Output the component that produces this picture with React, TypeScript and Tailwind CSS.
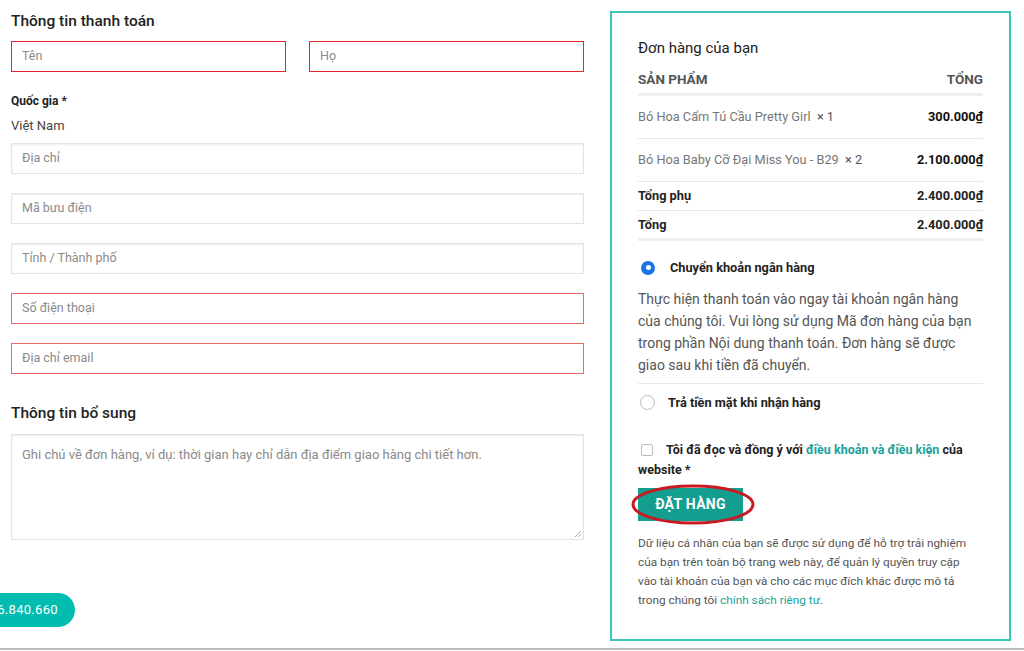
import React from "react";

const font = { fontFamily: "Roboto, 'Noto Sans', Arial, sans-serif" };

function DarkRedField({ ph }: { ph: string }) {
  return (
    <div className="h-[31px] flex items-center px-[10px] bg-white text-[12.5px] text-[#8a8a8a] border-[1.5px] border-solid border-[#e3262e]">
      {ph}
    </div>
  );
}

function RedField({ ph }: { ph: string }) {
  return (
    <div className="h-[31px] flex items-center px-[10px] bg-white text-[12.5px] text-[#8a8a8a] border-[1.5px] border-solid border-[#ee6a6a]">
      {ph}
    </div>
  );
}

function Field({ ph }: { ph: string }) {
  return (
    <div className="h-[31px] flex items-center px-[10px] bg-white text-[12.5px] text-[#8a8a8a] border border-[#e3e3e3] shadow-[inset_0_1px_2px_rgba(0,0,0,0.08)]">
      {ph}
    </div>
  );
}

export default function App() {
  return (
    <div style={font} className="relative w-[1024px] h-[651px] bg-white overflow-hidden text-[#222]">
      <div className="flex">
        {/* Left column */}
        <div className="ml-[11px] w-[573px] pt-[11px]">
          <h2 className="text-[15.5px] font-medium leading-[20px] text-[#222]">Thông tin thanh toán</h2>
          <div className="mt-[10px] flex gap-[23px]">
            <div className="flex-1"><DarkRedField ph="Tên" /></div>
            <div className="flex-1"><DarkRedField ph="Họ" /></div>
          </div>
          <div className="mt-[21px] text-[12px] font-bold leading-[16px] text-[#222]">Quốc gia *</div>
          <div className="mt-[9px] text-[13px] leading-[16px] text-[#444]">Việt Nam</div>
          <div className="mt-[9px] flex flex-col gap-[19px]">
            <Field ph="Địa chỉ" />
            <Field ph="Mã bưu điện" />
            <Field ph="Tỉnh / Thành phố" />
            <RedField ph="Số điện thoại" />
            <RedField ph="Địa chỉ email" />
          </div>
          <h2 className="mt-[29px] text-[15.5px] font-medium leading-[20px] text-[#222]">Thông tin bổ sung</h2>
          <div className="relative mt-[11px] h-[106px] border border-[#e3e3e3] shadow-[inset_0_1px_2px_rgba(0,0,0,0.08)] px-[10px] pt-[12px] text-[13px] text-[#8a8a8a] leading-[16px]">
            Ghi chú về đơn hàng, ví dụ: thời gian hay chỉ dẫn địa điểm giao hàng chi tiết hơn.
            <svg className="absolute right-[1px] bottom-[1px]" width="8" height="8" viewBox="0 0 8 8">
              <path d="M7 1 L1 7 M7 4 L4 7" stroke="#999" strokeWidth="0.8" />
            </svg>
          </div>
        </div>

        {/* Right panel */}
        <div className="ml-[26px] mt-[11px] w-[401px] h-[630px] border-2 border-[#3cc4b9] px-[26px] pt-[25px]">
          <h3 className="text-[15px] leading-[20px] text-[#222]">Đơn hàng của bạn</h3>
          <div className="mt-[13px] flex justify-between text-[13.5px] font-bold text-[#555] leading-[16px] pb-[6px] border-b-[3px] border-[#eeeeee]">
            <span>SẢN PHẨM</span>
            <span>TỔNG</span>
          </div>
          <div className="flex justify-between items-center h-[43px] border-b border-[#e8e8e8] text-[12.75px]">
            <span className="text-[#777]">Bó Hoa Cẩm Tú Cầu Pretty Girl&nbsp; <span className="text-[#555]">× 1</span></span>
            <span className="font-bold text-[#111]">300.000₫</span>
          </div>
          <div className="flex justify-between items-center h-[43px] border-b border-[#e8e8e8] text-[12.75px]">
            <span className="text-[#777]">Bó Hoa Baby Cỡ Đại Miss You - B29&nbsp; <span className="text-[#555]">× 2</span></span>
            <span className="font-bold text-[#111]">2.100.000₫</span>
          </div>
          <div className="flex justify-between items-center h-[29px] border-b border-[#e8e8e8] text-[12.75px] font-bold text-[#222]">
            <span>Tổng phụ</span>
            <span>2.400.000₫</span>
          </div>
          <div className="flex justify-between items-center h-[30px] border-b-[3px] border-[#eeeeee] text-[12.75px] font-bold text-[#222]">
            <span>Tổng</span>
            <span>2.400.000₫</span>
          </div>

          <div className="mt-[17px] flex items-center pl-[3px]">
            <span className="w-[14px] h-[14px] rounded-full bg-[#1a73e8] flex items-center justify-center">
              <span className="w-[5px] h-[5px] rounded-full bg-white" />
            </span>
            <span className="ml-[15px] text-[12.75px] font-bold text-[#222]">Chuyển khoản ngân hàng</span>
          </div>
          <p className="mt-[11px] text-[14px] leading-[22px] text-[#555] pb-[7px] border-b border-[#e8e8e8]">
            Thực hiện thanh toán vào ngay tài khoản ngân hàng của chúng tôi. Vui lòng sử dụng Mã đơn hàng của bạn trong phần Nội dung thanh toán. Đơn hàng sẽ được giao sau khi tiền đã chuyển.
          </p>
          <div className="mt-[9px] flex items-center pl-[2px]">
            <span className="w-[15px] h-[15px] rounded-full border border-[#bbb] bg-white" />
            <span className="ml-[13px] text-[12.75px] font-bold text-[#222]">Trả tiền mặt khi nhận hàng</span>
          </div>

          <p className="mt-[28px] text-[12.5px] font-bold leading-[20px] text-[#222]">
            <span className="inline-block align-[-2px] w-[12px] h-[12px] ml-[3px] mr-[13px] border border-[#bbb] rounded-[2px] bg-white" />
            Tôi đã đọc và đồng ý với <span className="text-[#1aa39a]">điều khoản và điều kiện</span> của website *
          </p>
          <div className="relative mt-[8px] w-[105px]">
            <div className="h-[33px] bg-[#139e8f] flex items-center justify-center text-white font-bold text-[14px] tracking-[0.3px]">
              ĐẶT HÀNG
            </div>
            <svg className="absolute left-[-7px] top-[-4px]" width="124" height="41" viewBox="0 0 124 41">
              <ellipse cx="62" cy="20.5" rx="60" ry="18.5" fill="none" stroke="#c81a22" strokeWidth="3" />
            </svg>
          </div>
          <p className="mt-[13px] w-[338px] text-[11.8px] leading-[19px] text-[#555]">
            Dữ liệu cá nhân của bạn sẽ được sử dụng để hỗ trợ trải nghiệm của bạn trên toàn bộ trang web này, để quản lý quyền truy cập vào tài khoản của bạn và cho các mục đích khác được mô tả trong chúng tôi <span className="text-[#1aa39a]">chính sách riêng tư</span>.
          </p>
        </div>
      </div>

      {/* floating phone pill */}
      <div className="absolute left-[-42px] top-[593px] h-[34px] pl-[24px] pr-[17px] rounded-full bg-[#00bdb0] flex items-center text-white text-[13px] tracking-[0.3px]">
        096.840.660
      </div>
      {/* bottom line */}
      <div className="absolute left-0 right-0 top-[648px] h-[2px] bg-[#bdbdbd]" />
    </div>
  );
}
